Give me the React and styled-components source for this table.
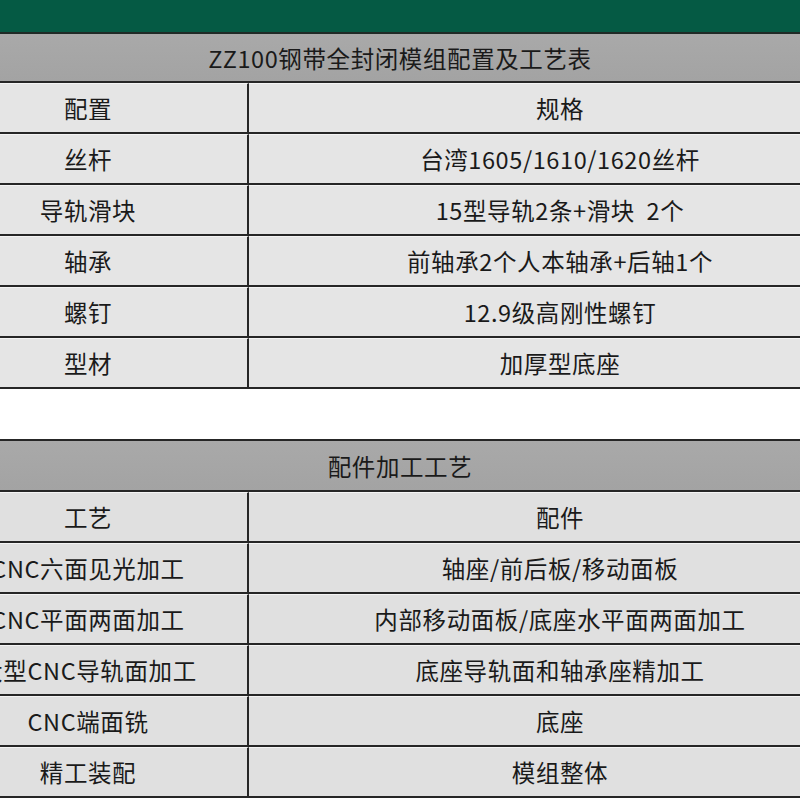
import React from "react";
import styled, { createGlobalStyle } from "styled-components";

const GlobalStyle = createGlobalStyle`
  html, body {
    margin: 0;
    padding: 0;
    background: #ffffff;
    overflow: hidden;
  }
  body {
    font-family: "Noto Sans CJK SC", "Noto Sans", sans-serif;
    color: #1a1a1a;
  }
`;

const Page = styled.div`
  width: 800px;
  height: 800px;
  overflow: hidden;
`;

const Sheet = styled.div`
  width: 942px;
  margin-left: -71px;
`;

const Banner = styled.div`
  height: 32px;
  background: #055a44;
  border-bottom: 2px solid #1f2a26;
`;

const Table = styled.div`
  display: grid;
  grid-template-columns: 320px 1fr;
  ${({ $framed }) => $framed && "border-top: 2px solid #262626;"}
`;

const Title = styled.div`
  grid-column: 1 / -1;
  height: ${({ $tall }) => ($tall ? "49px" : "47px")};
  display: flex;
  align-items: center;
  justify-content: center;
  background: linear-gradient(#a9a9a9, #a3a3a3);
  border-bottom: 2px solid #262626;
  font-size: 23.5px;
  letter-spacing: 0.6px;
`;

const Cell = styled.div`
  height: 48px;
  display: flex;
  align-items: center;
  justify-content: center;
  background: ${({ $shade }) => $shade || "#e5e5e5"};
  border-top: 1px solid #f4f4f4;
  border-bottom: 2px solid #262626;
  border-right: ${({ $left }) => ($left ? "2px solid #262626" : "none")};
  font-size: 23.5px;
  white-space: pre;
  letter-spacing: 0.6px;
`;

const Gap = styled.div`
  height: 50px;
`;

const specs = [
  ["配置", "规格"],
  ["丝杆", "台湾1605/1610/1620丝杆"],
  ["导轨滑块", "15型导轨2条+滑块  2个"],
  ["轴承", "前轴承2个人本轴承+后轴1个"],
  ["螺钉", "12.9级高刚性螺钉"],
  ["型材", "加厚型底座"],
];

const process = [
  ["工艺", "配件"],
  ["CNC六面见光加工", "轴座/前后板/移动面板"],
  ["CNC平面两面加工", "内部移动面板/底座水平面两面加工"],
  ["大型CNC导轨面加工", "底座导轨面和轴承座精加工"],
  ["CNC端面铣", "底座"],
  ["精工装配", "模组整体"],
];

function Rows({ rows, shade }) {
  return rows.map(([a, b], i) => (
    <React.Fragment key={i}>
      <Cell $left $shade={shade}>{a}</Cell>
      <Cell $shade={shade}>{b}</Cell>
    </React.Fragment>
  ));
}

export default function App() {
  return (
    <Page>
      <GlobalStyle />
      <Sheet>
        <Banner />
        <Table>
          <Title>ZZ100钢带全封闭模组配置及工艺表</Title>
          <Rows rows={specs} />
        </Table>
        <Gap />
        <Table $framed>
          <Title $tall>配件加工工艺</Title>
          <Rows rows={process} shade="#e0e0e0" />
        </Table>
      </Sheet>
    </Page>
  );
}
